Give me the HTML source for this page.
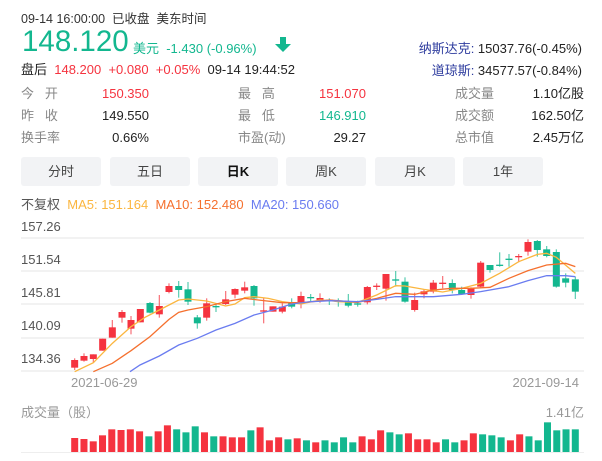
<!DOCTYPE html>
<html><head><meta charset="utf-8">
<style>
*{margin:0;padding:0;box-sizing:border-box}
body{width:602px;height:461px;background:#fff;font-family:"Liberation Sans","Noto Sans CJK SC",sans-serif;position:relative;overflow:hidden;color:#222}
.a{position:absolute;white-space:nowrap}
.g{color:#13b78f}.r{color:#f5333f}.l{color:#888}
.btn{position:absolute;top:157px;width:80px;height:29px;background:#f2f3f5;border-radius:3px;text-align:center;line-height:29px;font-size:13px;color:#444}
.f13{font-size:13px}
</style></head><body>
<div class="a" style="left:21px;top:8px;font-size:12.5px;color:#333">09-14 16:00:00&nbsp; 已收盘&nbsp; 美东时间</div>
<div class="a g" style="left:22px;top:25px;font-size:29.5px;line-height:34px">148.120</div>
<div class="a g" style="left:133px;top:38px;font-size:13px">美元&nbsp; -1.430 (-0.96%)</div>
<svg class="a" style="left:275px;top:37px" width="16" height="15"><path d="M5 0h6v7h5l-8 8-8-8h5z" fill="#13b78f"/></svg>
<div class="a f13" style="left:21px;top:59px;color:#222">盘后&nbsp; <span class="r">148.200&nbsp;&nbsp;+0.080&nbsp;&nbsp;+0.05%</span>&nbsp; 09-14 19:44:52</div>
<div class="a f13" style="right:20px;top:38px;text-align:right"><span style="color:#2f3d9f">纳斯达克:</span> 15037.76(-0.45%)</div>
<div class="a f13" style="right:20px;top:60px;text-align:right"><span style="color:#2f3d9f">道琼斯:</span> 34577.57(-0.84%)</div>

<div class="a f13 l" style="left:21px;top:83px;line-height:22px">今&nbsp;&nbsp;&nbsp;开<br>昨&nbsp;&nbsp;&nbsp;收<br>换手率</div>
<div class="a f13" style="right:453px;top:83px;line-height:22px;text-align:right"><span class="r">150.350</span><br>149.550<br>0.66%</div>
<div class="a f13 l" style="left:238px;top:83px;line-height:22px">最&nbsp;&nbsp;&nbsp;高<br>最&nbsp;&nbsp;&nbsp;低<br>市盈(动)</div>
<div class="a f13" style="right:236px;top:83px;line-height:22px;text-align:right"><span class="r">151.070</span><br><span class="g">146.910</span><br>29.27</div>
<div class="a f13 l" style="left:455px;top:83px;line-height:22px">成交量<br>成交额<br>总市值</div>
<div class="a f13" style="right:18px;top:83px;line-height:22px;text-align:right">1.10亿股<br>162.50亿<br>2.45万亿</div>

<div class="btn" style="left:21px">分时</div>
<div class="btn" style="left:110px">五日</div>
<div class="btn" style="left:198px;color:#111;font-weight:bold">日K</div>
<div class="btn" style="left:286px">周K</div>
<div class="btn" style="left:375px">月K</div>
<div class="btn" style="left:463px">1年</div>

<div class="a f13" style="left:21px;top:194px"><span style="color:#555">不复权</span>&nbsp; <span style="color:#fbb63f">MA5: 151.164</span>&nbsp; <span style="color:#f5702e">MA10: 152.480</span>&nbsp; <span style="color:#6a7cf0">MA20: 150.660</span></div>

<div class="a f13" style="left:21px;top:210px;color:#555;line-height:33px">157.26<br>151.54<br>145.81<br>140.09<br>134.36</div>
<div class="a f13" style="left:71px;top:375px;color:#999">2021-06-29</div>
<div class="a f13" style="right:23px;top:375px;color:#999">2021-09-14</div>
<div class="a f13" style="left:21px;top:402px;color:#999">成交量（股）</div>
<div class="a f13" style="right:18px;top:402px;color:#999">1.41亿</div>

<svg class="a" id="ch" style="left:0;top:0" width="602" height="461"></svg>
<script>
var s='';
[238,271,304,338,371].forEach(function(y){s+='<rect x="21" y="'+(y-1)+'" width="563" height="2" fill="#f2f2f2"/>';});
s+='<rect x="21" y="452" width="563" height="1" fill="#eee"/>';
var R='#f5333f',G='#13b78f';
var c1=[[44,390,413,385,420,R],[72,378,392,370,395,R],[100,373,387,373,397,R],[128,326,362,326,362,R],[157,292,323,270,323,R],[186,246,263,240,278,R],[213,270,296,258,313,R],[241,237,277,237,277,R],[270,219,248,216,250,G],[298,228,253,195,263,R],[327,168,186,160,190,R],[356,168,180,153,203,G],[384,178,215,156,225,G],[412,262,280,255,296,G],[440,220,263,205,272,R],[468,228,232,220,246,G],[497,208,222,183,225,R],[525,177,194,175,205,R],[554,172,182,155,190,R],[582,168,205,165,227,G],[611,241,243,205,280,R],[639,229,245,229,245,R],[667,230,245,220,250,R],[695,216,230,205,235,G],[723,198,222,185,235,R],[752,201,203,192,215,G],[780,204,210,190,218,R],[808,209,213,205,225,G]];
var c2=[[55,212,214,205,230,G],[85,215,227,192,232,G],[113,220,224,212,230,G],[142,171,217,168,223,R],[170,167,170,160,180,R],[198,132,176,132,212,R],[227,148,152,123,170,G],[255,155,215,142,218,G],[284,210,240,188,245,R],[312,184,193,178,205,R],[340,158,185,150,190,R],[368,158,161,138,175,R],[397,159,180,148,190,G],[425,180,192,170,193,G],[453,175,195,172,206,R],[482,98,170,93,172,R],[510,105,120,105,128,G],[539,104,107,67,110,G],[567,86,88,72,110,G],[596,78,81,72,97,R],[624,36,65,28,77,R],[652,33,60,30,80,G],[680,58,78,48,82,G],[709,66,170,58,173,G],[737,145,158,130,172,G],[766,148,185,140,207,G]];
function cd(a,ox){var x=a[0]/3+ox,bt=a[1]/3+230,bb=a[2]/3+230,wt=a[3]/3+230,wb=a[4]/3+230;
s+='<rect x="'+(x-0.6)+'" y="'+wt+'" width="1.2" height="'+(wb-wt)+'" fill="'+a[5]+'" opacity="0.7"/>';
s+='<rect x="'+(x-3.5)+'" y="'+bt+'" width="7" height="'+Math.max(1.3,bb-bt)+'" fill="'+a[5]+'"/>';}
function pl(p1,p2,col){var pts=p1.map(function(p){return (p[0]/3+60)+','+(p[1]/3+230)}).concat(p2.map(function(p){return (p[0]/3+320)+','+(p[1]/3+230)}));
s+='<polyline points="'+pts.join(' ')+'" fill="none" stroke="'+col+'" stroke-width="1.3"/>';}
c1.forEach(function(a){cd(a,60)});c2.forEach(function(a){cd(a,320)});
pl([[44,425],[100,398],[157,340],[213,290],[255,262],[298,240],[356,210],[384,207],[440,213],[497,228],[525,222],[554,203],[582,200],[625,205],[667,215],[723,222],[780,210],[810,212]],[[55,215],[113,217],[170,195],[227,167],[255,168],[312,178],[368,186],[425,175],[482,160],[539,130],[596,95],[652,73],[680,70],[709,82],[766,130]],'#fbb63f');
pl([[100,425],[157,400],[213,362],[270,320],[327,268],[356,247],[384,240],[440,230],[497,215],[554,205],[611,212],[667,218],[723,218],[810,210]],[[113,217],[170,205],[227,190],[284,193],[340,180],[397,175],[453,175],[510,172],[567,145],[624,122],[680,105],[737,100],[766,110]],'#f5702e');
pl([[210,425],[240,405],[298,378],[356,345],[412,325],[468,300],[525,280],[582,255],[639,240],[695,222],[752,215],[810,212]],[[113,215],[170,208],[227,200],[340,200],[425,193],[482,185],[567,170],[624,152],[680,137],[737,137],[766,140]],'#6a7cf0');
var v='r413 r416 r423 r405 r387 r389 r387 r393 g408 r393 r375 g387 g396 g378 r396 g408 r408 r411 r411 g390 r381 r420 r411 g417 r414 g420 r426 g420 g426 g411 g426 r408 r417 r390 g396 g402 r399 r417 r417 r426 g417 g426 r420 r399 g402 g405 g411 r420 r402 g408 g420 g366 g390 g387 g387'.split(' ');
for(var i=0;i<v.length;i++){var x=74.7+i*(500.6/(v.length-1));var h=(455-(+v[i].slice(1)))/3;
s+='<rect x="'+(x-3.5)+'" y="'+(452-h)+'" width="7" height="'+h+'" fill="'+(v[i][0]=='r'?R:G)+'"/>';}
document.getElementById('ch').innerHTML=s;
</script>
</body></html>
